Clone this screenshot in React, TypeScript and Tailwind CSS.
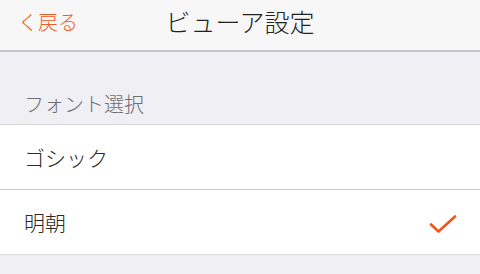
const jp = "font-['Noto_Sans_CJK_JP',sans-serif]";

function Check() {
  return (
    <svg width="28" height="20" viewBox="0 0 28 20" fill="none" className="mt-[3px] shrink-0">
      <path
        d="M2 10.5 L9.5 17.5 L26 2.5"
        stroke="#f2541b"
        strokeWidth="2.6"
        strokeLinecap="round"
        strokeLinejoin="round"
      />
    </svg>
  );
}

function Row({ label, checked, last }: { label: string; checked?: boolean; last?: boolean }) {
  return (
    <div
      className={`flex h-[65px] items-center justify-between bg-white pl-6 pr-[23px] ${
        last ? "border-b border-[#dcdce0]" : "border-b border-[#c8c7cc]"
      }`}
    >
      <span className="text-[21px] leading-none font-light text-[#2a2a2a]">{label}</span>
      {checked && <Check />}
    </div>
  );
}

export default function App() {
  return (
    <div className={`flex h-[274px] w-[480px] flex-col overflow-hidden bg-[#efeff4] ${jp}`}>
      <header className="relative flex h-[52px] shrink-0 items-start border-b-2 border-[#c8c8c8] bg-[#f7f7f7] pt-[11px]">
        <button className="flex items-center pl-[18px] pt-[1px] text-[20px] leading-none font-light text-[#f05a24]">
          <span>く戻る</span>
        </button>
        <h1 className="absolute top-[9px] left-1/2 -translate-x-1/2 text-[25px] leading-none font-light text-[#222]">
          ビューア設定
        </h1>
      </header>
      <div className="flex h-[73px] shrink-0 items-end border-b border-[#d6d6da] pb-[10px] pl-6">
        <span className="text-[20px] leading-none font-light text-[#6d6d72]">フォント選択</span>
      </div>
      <Row label="ゴシック" />
      <Row label="明朝" checked last />
    </div>
  );
}
